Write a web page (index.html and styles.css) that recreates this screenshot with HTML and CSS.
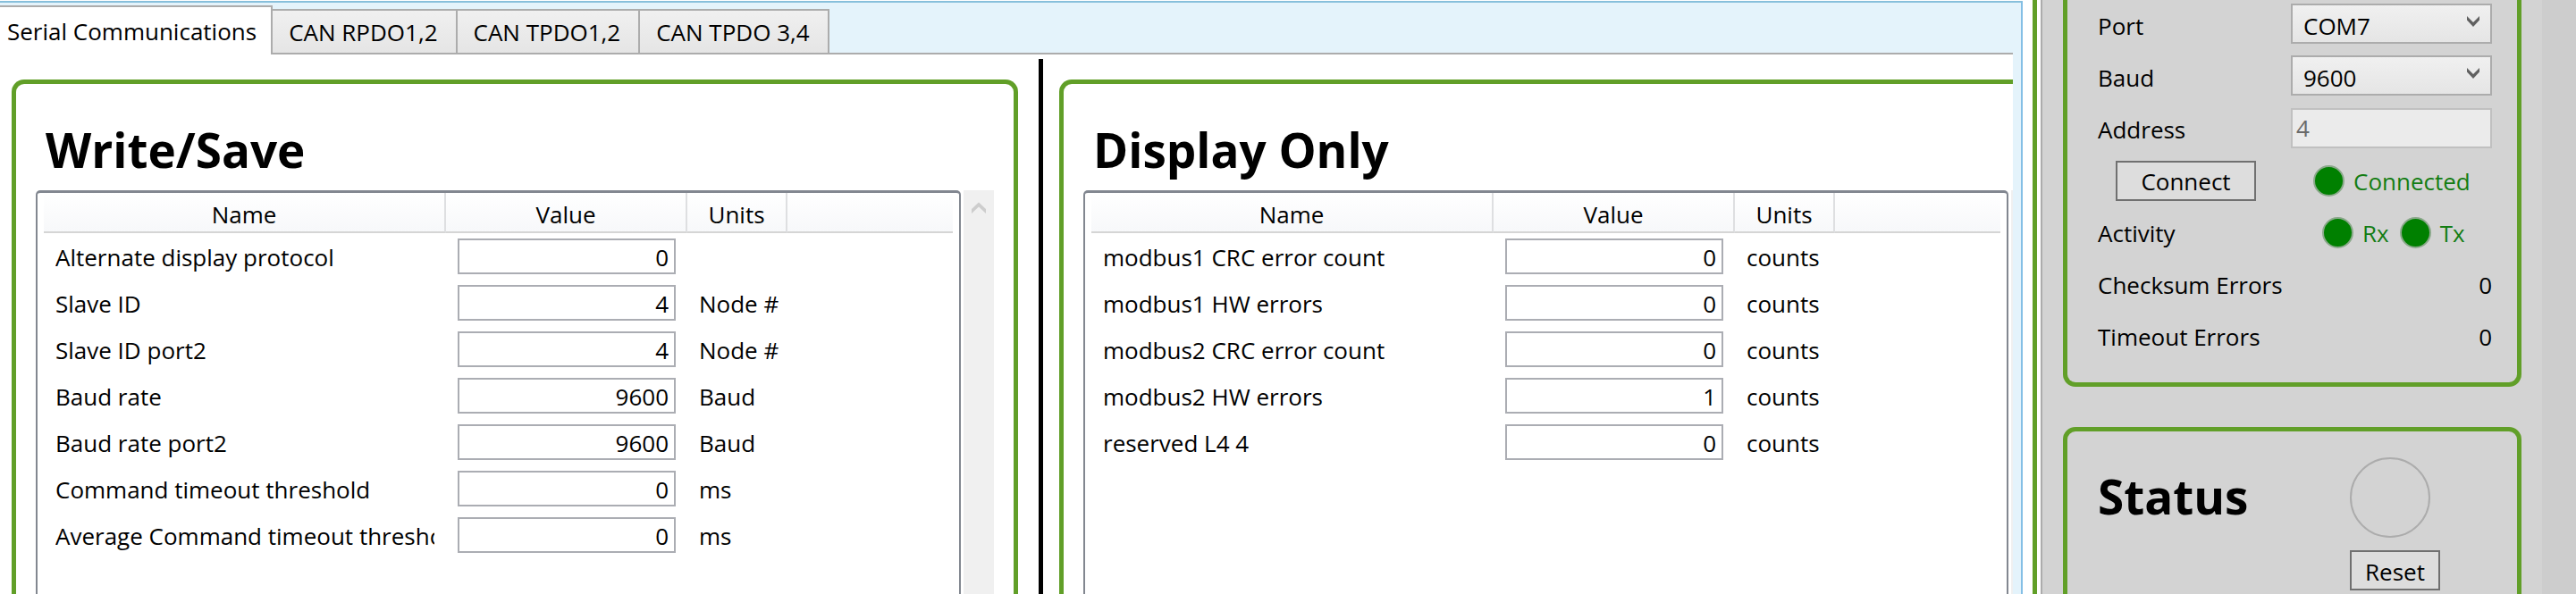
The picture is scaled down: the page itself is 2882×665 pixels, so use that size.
FILE: index.html
```html
<!DOCTYPE html>
<html lang="en">
<head>
<meta charset="utf-8">
<title>Serial Communications</title>
<link rel="stylesheet" href="styles.css">
</head>
<body>
<div class="app">
  <main class="workspace">
    <div class="tabs" role="tablist">
      <button class="tab tab-active" role="tab" aria-selected="true">Serial Communications</button>
      <button class="tab" role="tab" aria-selected="false">CAN RPDO1,2</button>
      <button class="tab" role="tab" aria-selected="false">CAN TPDO1,2</button>
      <button class="tab" role="tab" aria-selected="false">CAN TPDO 3,4</button>
    </div>
    <div class="page" role="tabpanel">
      <section class="group group-write">
        <h2 class="title">Write/Save</h2>
        <div class="list-area">
          <div class="list">
            <table class="grid">
              <colgroup><col class="col-name"><col class="col-value"><col class="col-units"><col></colgroup>
              <thead><tr><th>Name</th><th>Value</th><th>Units</th><th class="last"></th></tr></thead>
              <tbody>
                <tr><td><label for="w1">Alternate display protocol</label></td><td class="cell-value"><input id="w1" class="field" value="0"></td><td></td><td></td></tr>
                <tr><td><label for="w2">Slave ID</label></td><td class="cell-value"><input id="w2" class="field" value="4"></td><td>Node #</td><td></td></tr>
                <tr><td><label for="w3">Slave ID port2</label></td><td class="cell-value"><input id="w3" class="field" value="4"></td><td>Node #</td><td></td></tr>
                <tr><td><label for="w4">Baud rate</label></td><td class="cell-value"><input id="w4" class="field" value="9600"></td><td>Baud</td><td></td></tr>
                <tr><td><label for="w5">Baud rate port2</label></td><td class="cell-value"><input id="w5" class="field" value="9600"></td><td>Baud</td><td></td></tr>
                <tr><td><label for="w6">Command timeout threshold</label></td><td class="cell-value"><input id="w6" class="field" value="0"></td><td>ms</td><td></td></tr>
                <tr><td><label for="w7">Average Command timeout threshold</label></td><td class="cell-value"><input id="w7" class="field" value="0"></td><td>ms</td><td></td></tr>
              </tbody>
            </table>
          </div>
          <div class="scrollbar">
            <svg class="scroll-icon" viewBox="0 0 18 14" aria-hidden="true"><path d="M1 8 L9 0.5 L17 8 V13 L9 5.5 L1 13 Z"/></svg>
          </div>
        </div>
      </section>
      <div class="splitter"></div>
      <section class="group">
        <h2 class="title">Display Only</h2>
        <div class="list-area">
          <div class="list">
            <table class="grid">
              <colgroup><col class="col-name"><col class="col-value"><col class="col-units"><col></colgroup>
              <thead><tr><th>Name</th><th>Value</th><th>Units</th><th class="last"></th></tr></thead>
              <tbody>
                <tr><td><label for="d1">modbus1 CRC error count</label></td><td class="cell-value"><input id="d1" class="field" value="0" readonly></td><td>counts</td><td></td></tr>
                <tr><td><label for="d2">modbus1 HW errors</label></td><td class="cell-value"><input id="d2" class="field" value="0" readonly></td><td>counts</td><td></td></tr>
                <tr><td><label for="d3">modbus2 CRC error count</label></td><td class="cell-value"><input id="d3" class="field" value="0" readonly></td><td>counts</td><td></td></tr>
                <tr><td><label for="d4">modbus2 HW errors</label></td><td class="cell-value"><input id="d4" class="field" value="1" readonly></td><td>counts</td><td></td></tr>
                <tr><td><label for="d5">reserved L4 4</label></td><td class="cell-value"><input id="d5" class="field" value="0" readonly></td><td>counts</td><td></td></tr>
              </tbody>
            </table>
          </div>
          <div class="scrollbar"></div>
        </div>
      </section>
    </div>
  </main>
  <div class="divider"></div>
  <aside class="side">
    <section class="panel panel-connection">
      <div class="row">
        <label for="port">Port</label>
        <div class="select-wrap">
          <select id="port" class="control select"><option>COM7</option></select>
          <svg class="chevron" viewBox="0 0 16 12" aria-hidden="true"><path d="M1 0 L8 7 L15 0 V4.5 L8 12 L1 4.5 Z"/></svg>
        </div>
      </div>
      <div class="row">
        <label for="baud">Baud</label>
        <div class="select-wrap">
          <select id="baud" class="control select"><option>9600</option></select>
          <svg class="chevron" viewBox="0 0 16 12" aria-hidden="true"><path d="M1 0 L8 7 L15 0 V4.5 L8 12 L1 4.5 Z"/></svg>
        </div>
      </div>
      <div class="row">
        <label for="address">Address</label>
        <input id="address" class="control address" value="4" disabled>
      </div>
      <div class="row">
        <button class="button button-connect">Connect</button>
        <div class="leds leds-single"><i class="led"></i><span>Connected</span></div>
      </div>
      <div class="row">
        <span>Activity</span>
        <div class="leds leds-pair"><i class="led"></i><span>Rx</span><i class="led led-next"></i><span>Tx</span></div>
      </div>
      <div class="row"><span>Checksum Errors</span><output class="count">0</output></div>
      <div class="row"><span>Timeout Errors</span><output class="count">0</output></div>
    </section>
    <section class="panel panel-status">
      <h2 class="title status-title">Status</h2>
      <div class="status-box">
        <div class="status-lamp"></div>
        <button class="button button-reset">Reset</button>
      </div>
    </section>
  </aside>
  <div class="gutter"></div>
</div>
</body>
</html>
```
FILE: styles.css
```css
* { box-sizing: border-box; }

body {
  margin: 0;
  background: #fff;
  color: #000;
  font: 26px/36px "Open Sans", "Noto Sans", sans-serif;
}

button, input, select { font: inherit; color: inherit; border-radius: 0; margin: 0; }

.app { display: flex; height: 100vh; overflow: hidden; }

/* Tabbed workspace */
.workspace {
  flex: 1;
  min-width: 0;
  display: flex;
  flex-direction: column;
  margin-top: 1px;
  padding-right: 9px;
  background: #e4f3fb;
  border-top: 2px solid #87bfdb;
  border-right: 2px solid #84bfe5;
}

.tabs { display: flex; align-items: flex-end; height: 56px; padding-top: 3px; }

.tab {
  height: 49px;
  padding: 0 20px 0 18px;
  border: 2px solid #acacac;
  border-left-width: 0;
  border-bottom: 0;
  background: linear-gradient(#f0f0f0, #e5e5e5);
  white-space: nowrap;
}

.tab-active {
  position: relative;
  height: 55px;
  margin-bottom: -2px;
  padding: 0 16px 0 8px;
  background: #fff;
}

.page {
  flex: 1;
  min-height: 0;
  display: flex;
  overflow: hidden;
  background: #fff;
  border-top: 2px solid #acacac;
}

.group {
  flex: 0 0 50%;
  display: flex;
  flex-direction: column;
  margin-top: 28px;
  padding: 0 22px;
  border: 5px solid #619f28;
  border-bottom: 0;
  border-radius: 14px 14px 0 0;
}

.group-write { margin-left: 13px; }

.title { margin: 0; font-size: 53px; line-height: 72px; font-weight: 700; white-space: nowrap; }

.group .title { padding: 38px 0 9px; margin-left: 11px; }

.splitter { flex: none; width: 5px; margin: 5px 18px 0 23px; background: #000; }

.list-area { flex: 1; display: flex; gap: 3px; }

.list {
  flex: 1;
  min-width: 0;
  padding: 0 7px;
  border: 3px solid #828790;
  border-width: 3px 2px 0;
  border-radius: 5px 5px 0 0;
}

.scrollbar { flex: none; width: 34px; padding-top: 13px; background: #f0f0f0; }
.scroll-icon { display: block; width: 18px; height: 14px; margin: 0 auto; fill: #cdcdcd; }

.grid { width: 100%; table-layout: fixed; border-collapse: separate; border-spacing: 0; }
.col-name { width: 450px; }
.col-value { width: 270px; }
.col-units { width: 112px; }

.grid th {
  height: 45px;
  padding: 4px 0 0;
  font-weight: 400;
  background: linear-gradient(#fff, #f7f8fa);
  border-right: 2px solid #dedfe1;
  border-bottom: 2px solid #d5d5d5;
}
.grid th.last { border-right: 0; }

.grid td { height: 52px; padding: 2px 13px 0; white-space: nowrap; }
.grid td.cell-value { padding: 0 13px; }
.grid label { display: block; overflow: hidden; }

.field {
  display: block;
  width: 100%;
  height: 40px;
  padding: 2px 6px 0;
  border: 2px solid #abadb3;
  background: #fff;
  text-align: right;
}

/* Line between workspace and sidebar */
.divider { flex: none; width: 20px; border: solid #fff; border-width: 0 4px 0 11px; background: #619f28; }

/* Sidebar */
.side {
  flex: none;
  width: 561px;
  padding: 0 23px;
  background: #d3d3d3;
  border-left: 2px solid #acacac;
}
.gutter { flex: none; width: 38px; background: #cdcdcd; }

.panel { border: 5px solid #619f28; padding: 0 28px 0 34px; }

.panel-connection { height: 433px; border-top: 0; border-radius: 0 0 14px 14px; }

.row { display: flex; align-items: center; justify-content: space-between; height: 58px; }

.select-wrap { position: relative; margin-top: -5px; }

.control { display: block; width: 225px; height: 45px; border: 2px solid #acacac; }

.select {
  appearance: none;
  padding: 4px 0 0 12px;
  background: linear-gradient(#f0f0f0, #e5e5e5);
}

.chevron { position: absolute; top: 14px; right: 13px; width: 16px; height: 12px; fill: #606060; pointer-events: none; }

.address { margin-top: -4px; padding: 0 4px; background: #ebebeb; border-color: #c0c0c0; color: #6a6a6a; }

.button { height: 45px; padding: 2px 0 0; border: 2px solid #707070; background: #ddd; }
.button-connect { width: 157px; margin: -2px 0 0 20px; }

.leds { display: flex; align-items: center; color: #137d13; }
.leds-single { width: 200px; }
.leds-pair { width: 190px; }
.led {
  width: 35px;
  height: 35px;
  margin: -2px 10px 0 0;
  border: 2px solid #8aa88a;
  border-radius: 50%;
  background: #008000;
}
.led-next { margin-left: 12px; }

.panel-status {
  display: flex;
  justify-content: space-between;
  height: 240px;
  margin-top: 45px;
  border-radius: 14px;
}

.status-title { margin-top: 37px; }

.status-box { width: 159px; padding-top: 29px; }
.status-lamp { width: 90px; height: 90px; border: 2px solid #acacac; border-radius: 50%; }
.button-reset { width: 101px; margin-top: 14px; }
```
